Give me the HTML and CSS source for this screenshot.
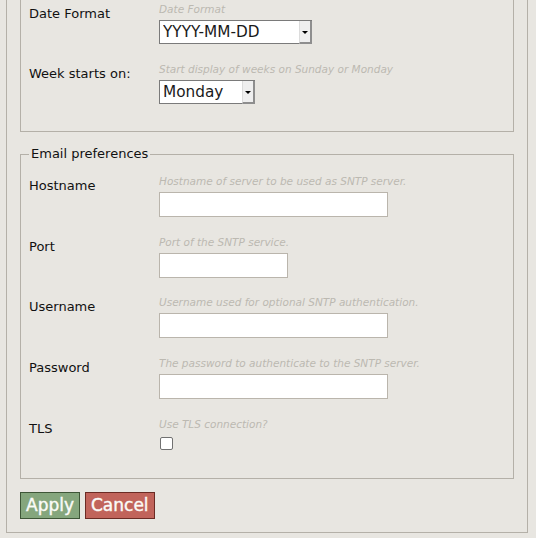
FILE: index.html
```html
<!DOCTYPE html>
<html lang="en">
<head>
<meta charset="utf-8">
<title>Preferences</title>
<link rel="stylesheet" href="styles.css">
</head>
<body>
<form class="panel">
  <fieldset class="group group-display">
    <div class="row">
      <label class="label" for="datefmt">Date Format</label>
      <div class="field">
        <div class="hint">Date Format</div>
        <span class="select-wrap"><select id="datefmt" class="select select-wide"><option>YYYY-MM-DD</option></select></span>
      </div>
    </div>
    <div class="row">
      <label class="label" for="weekstart">Week starts on:</label>
      <div class="field">
        <div class="hint">Start display of weeks on Sunday or Monday</div>
        <span class="select-wrap"><select id="weekstart" class="select select-narrow"><option>Monday</option></select></span>
      </div>
    </div>
  </fieldset>
  <fieldset class="group group-email">
    <legend class="legend">Email preferences</legend>
    <div class="row">
      <label class="label" for="host">Hostname</label>
      <div class="field">
        <div class="hint">Hostname of server to be used as SNTP server.</div>
        <input id="host" class="text-input" type="text">
      </div>
    </div>
    <div class="row">
      <label class="label" for="port">Port</label>
      <div class="field">
        <div class="hint">Port of the SNTP service.</div>
        <input id="port" class="text-input text-input-short" type="text">
      </div>
    </div>
    <div class="row">
      <label class="label" for="user">Username</label>
      <div class="field">
        <div class="hint">Username used for optional SNTP authentication.</div>
        <input id="user" class="text-input" type="text">
      </div>
    </div>
    <div class="row">
      <label class="label" for="pass">Password</label>
      <div class="field">
        <div class="hint">The password to authenticate to the SNTP server.</div>
        <input id="pass" class="text-input" type="password">
      </div>
    </div>
    <div class="row">
      <label class="label" for="tls">TLS</label>
      <div class="field">
        <div class="hint">Use TLS connection?</div>
        <input id="tls" class="checkbox" type="checkbox">
      </div>
    </div>
  </fieldset>
  <div class="actions">
    <button type="button" class="btn btn-apply">Apply</button>
    <button type="button" class="btn btn-cancel">Cancel</button>
  </div>
</form>
</body>
</html>
```

FILE: styles.css
```css
html, body {
  margin: 0;
  background: #e8e6e1;
}

body {
  font-family: "DejaVu Sans", "Liberation Sans", sans-serif;
  font-size: 13px;
  line-height: 16px;
  color: #111;
  overflow: hidden;
}

.panel {
  margin: -30px 0 0 6px;
  width: 522px;
  box-sizing: border-box;
  border: 1px solid #b4b0a8;
  padding: 13px;
}

.group {
  margin: 0 0 13px;
  border: 1px solid #b4b0a8;
  padding: 18px 8px 9px;
  min-width: 0;
}

.group-email {
  margin-top: 14px;
  padding-top: 13px;
}

.legend {
  padding: 0 2px;
  font-size: 13px;
  line-height: 16px;
  color: #111;
}

.row {
  display: grid;
  grid-template-columns: 130px 1fr;
  margin-bottom: 18.6px;
}

.label {
  margin-top: 3px;
  font-size: 13px;
  line-height: 16px;
  color: #111;
}

.field {
  display: flex;
  flex-direction: column;
  align-items: flex-start;
}

.hint {
  font-size: 10.5px;
  line-height: 12px;
  font-style: italic;
  color: #bcb9b1;
  white-space: nowrap;
}

.select-wrap {
  position: relative;
  display: inline-block;
  margin-top: 5px;
  line-height: 0;
}

.select {
  appearance: none;
  -webkit-appearance: none;
  box-sizing: border-box;
  height: 24px;
  margin: 0;
  padding: 0 14px 0 3px;
  border: 1px solid #7a7a7a;
  border-radius: 0;
  background: #fff;
  font-family: "DejaVu Sans", sans-serif;
  font-size: 15.3px;
  line-height: 22px;
  color: #1a1a1a;
}

.select-wide {
  width: 153px;
}

.select-narrow {
  width: 96px;
}

.select-wrap::after {
  content: "";
  position: absolute;
  top: 1px;
  right: 0;
  bottom: 0;
  width: 13px;
  box-sizing: border-box;
  background: #efefef;
  border-left: 1px solid #dcdcdc;
  border-right: 2px solid #8e8e8e;
  border-bottom: 2px solid #8e8e8e;
  pointer-events: none;
}

.select-wrap::before {
  content: "";
  position: absolute;
  z-index: 1;
  right: 4px;
  top: 11px;
  width: 0;
  height: 0;
  border-left: 3px solid transparent;
  border-right: 3px solid transparent;
  border-top: 3px solid #000;
  pointer-events: none;
}

.text-input {
  display: block;
  box-sizing: border-box;
  width: 229px;
  height: 25px;
  margin: 5px 0 0;
  padding: 0 3px;
  border: 1px solid #bab5ac;
  border-radius: 0;
  background: #fff;
  font-family: "DejaVu Sans", sans-serif;
  font-size: 13px;
}

.text-input-short {
  width: 129px;
}

.checkbox {
  appearance: none;
  -webkit-appearance: none;
  display: block;
  box-sizing: border-box;
  width: 13px;
  height: 13px;
  margin: 7px 0 1px 1px;
  border: 1px solid #717171;
  border-radius: 2px;
  background: #fff;
}

.actions {
  display: flex;
  gap: 5px;
}

.btn {
  box-sizing: border-box;
  height: 27px;
  margin: 0;
  padding: 0 5px;
  border: 1px solid;
  border-radius: 0;
  font-family: "DejaVu Sans", sans-serif;
  font-size: 17px;
  line-height: 25px;
  color: #fbfbf8;
  -webkit-text-stroke: 0.4px #fbfbf8;
  cursor: pointer;
}

.btn-apply {
  background: #85a67d;
  border-color: #3e5637;
}

.btn-cancel {
  background: #c1645b;
  border-color: #6b2b24;
}
```
